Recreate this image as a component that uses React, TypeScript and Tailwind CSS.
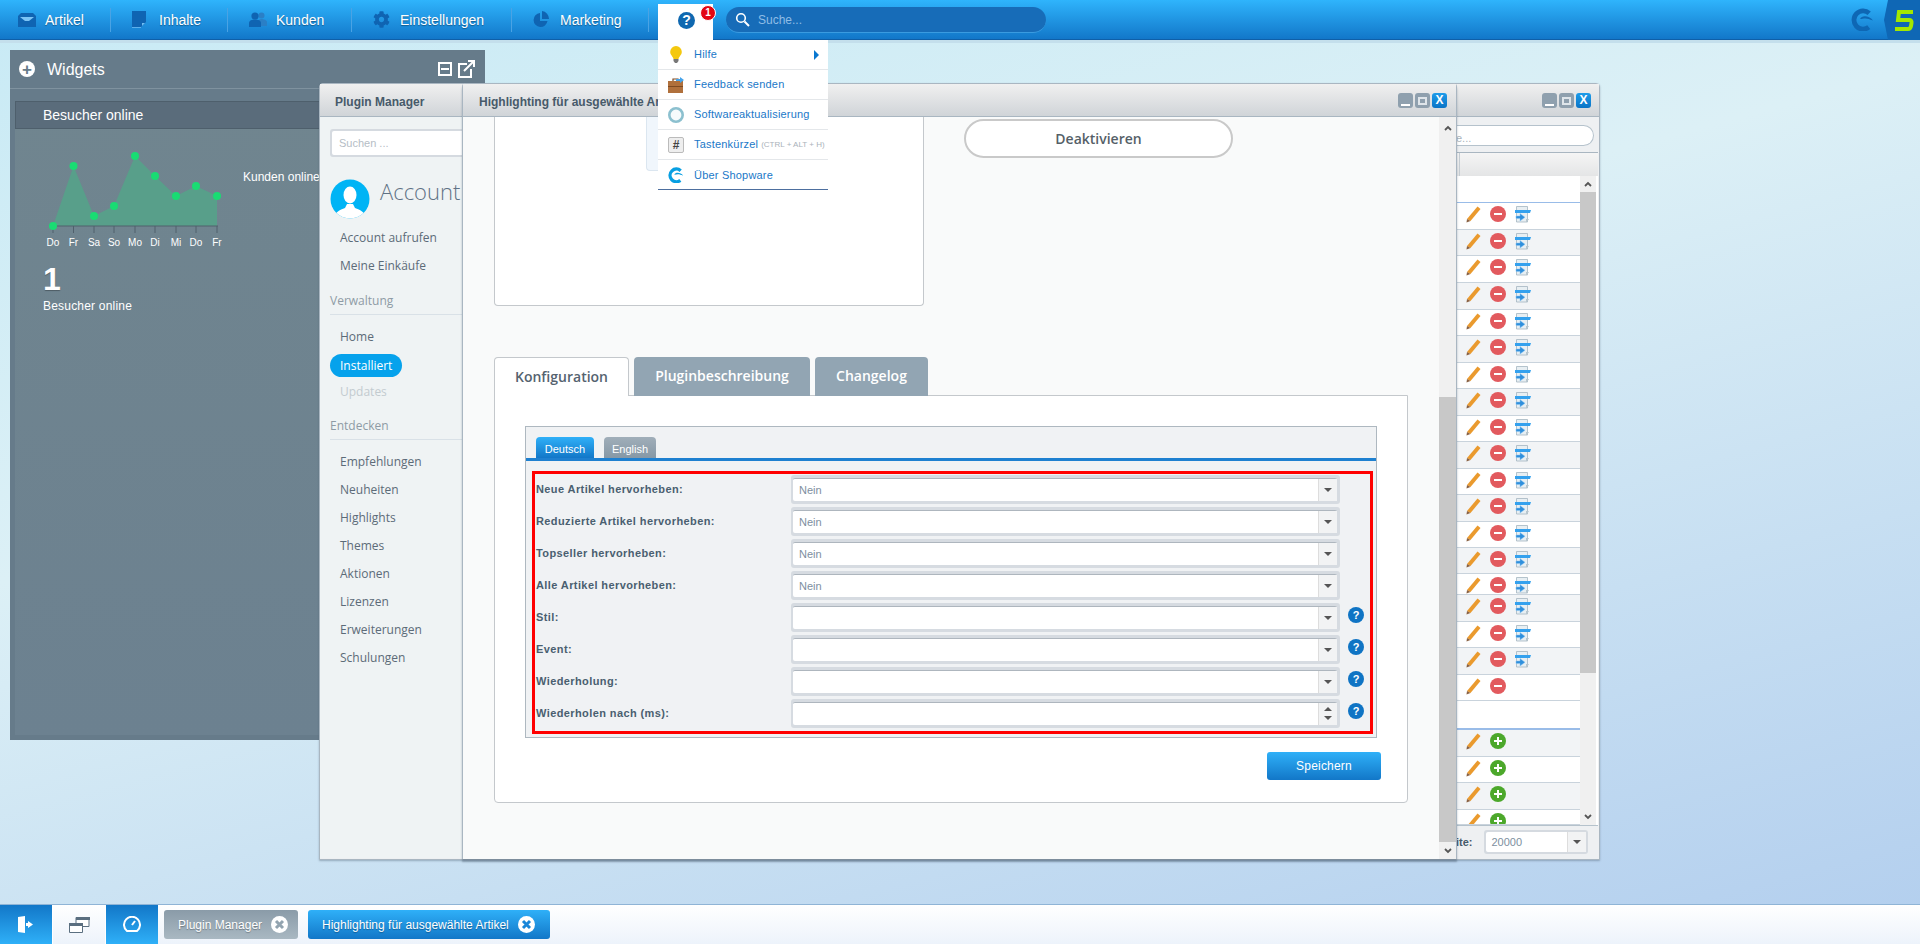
import React from "react";
import { FaCog } from "react-icons/fa";

const ARIAL = "font-['Liberation_Sans',Arial,sans-serif]";
const OPEN = "font-['Open_Sans','Noto_Sans',sans-serif]";

const ShopwareLogo = ({ color = "#0e67b4", className = "" }: { color?: string; className?: string }) => (
  <svg viewBox="0 0 24 24" className={className}>
    <path d="M19 5.500A9.500 9.500 0 1 0 18.500 20" fill="none" stroke={color} strokeWidth="5" />
    <path fill={color} d="M9.500 11.500C11 7.500 18.500 7.500 23 13c-4-1-5.500-2-8-2-2 0-3.500.5-5.500.5z" />
  </svg>
);

const NavIcon = ({ kind }: { kind: string }) => {
  const c = "#0f64b2";
  if (kind === "artikel")
    return (
      <svg width="18" height="16" viewBox="0 0 18 16">
        <path fill={c} d="M0 4 3 1h12l3 3v11H0z" />
        <path fill="#7cc4f5" d="M2 5h14l-5 4H7z" />
      </svg>
    );
  if (kind === "inhalte")
    return (
      <svg width="14" height="17" viewBox="0 0 14 17">
        <path fill={c} d="M0 0h14v11l-5 5H0z" />
        <path fill="#6ebcf2" d="M10 12h3l-3 3z" />
        <path fill="#5cb0ec" d="M0 16h9v1H0z" />
      </svg>
    );
  if (kind === "kunden")
    return (
      <svg width="18" height="15" viewBox="0 0 18 15">
        <circle cx="12.500" cy="3.500" r="3" fill="#2a7fc6" />
        <path fill="#2a7fc6" d="M9 14V10c0-2 2-3 3.500-3S18 8 18 10v4z" />
        <circle cx="6" cy="4" r="3.600" fill={c} />
        <path fill={c} d="M0 15v-4c0-2.500 3-3.600 6-3.600s6 1.100 6 3.600v4z" />
      </svg>
    );
  if (kind === "gear") return <FaCog size={17} color={c} />;
  return (
    <svg width="16" height="17" viewBox="0 0 16 17">
      <path fill={c} d="M7 2a7 7 0 1 0 7.500 8H7z" />
      <path fill={c} d="M9 0v8h7a8 8 0 0 0-7-8z" />
    </svg>
  );
};

const navItems = [
  { icon: "artikel", label: "Artikel", iconW: "w-[18px]", textGap: "ml-[9px]", pad: "pl-[18px] w-[111px]" },
  { icon: "inhalte", label: "Inhalte", iconW: "w-[14px]", textGap: "ml-[13px]", pad: "pl-[21px] w-[117px]" },
  { icon: "kunden", label: "Kunden", iconW: "w-[18px]", textGap: "ml-[9px]", pad: "pl-[21px] w-[124px]" },
  { icon: "gear", label: "Einstellungen", iconW: "w-[17px]", textGap: "ml-[10px]", pad: "pl-[21px] w-[160px]" },
  { icon: "pie", label: "Marketing", iconW: "w-[16px]", textGap: "ml-[11px]", pad: "pl-[21px] w-[137px]" },
];

const TopBar = () => (
  <div className="relative h-[43px] shrink-0">
    <div className="h-[40px] bg-[linear-gradient(#2fb4fc,#1277c9)] border-b border-[#0f5fa8] flex items-center">
      {navItems.map((n) => (
        <div key={n.label} className={`${n.pad} h-[24px] flex items-center border-r border-[#4aa3e4]`}>
          <span className={`${n.iconW} flex justify-center`}>
            <NavIcon kind={n.icon} />
          </span>
          <span className={`${n.textGap} pt-[1px] text-[14px] text-white [text-shadow:0_1px_1px_rgba(0,0,0,0.35)]`}>{n.label}</span>
        </div>
      ))}
      <div className="w-[9px]" />
      <div className="w-[55px] h-[36px] mt-[4px] bg-white relative flex justify-center pt-[8px] self-start">
        <span className="absolute left-[20px] top-[8px] w-[17px] h-[17px] rounded-full bg-[#0f68b0] text-white text-[14px] leading-[17px] font-bold text-center">?</span>
        <span className="absolute left-[42px] top-[1px] w-[16px] h-[16px] rounded-full bg-[#e30613] border border-white text-white text-[10px] leading-[14px] font-bold text-center">1</span>
      </div>
      <div className="ml-[13px] w-[320px] h-[26px] rounded-full bg-[#176cb8] border-b border-[#3a9be0] flex items-center pl-[9px]">
        <svg width="15" height="15" viewBox="0 0 15 15">
          <circle cx="6" cy="6" r="4.300" fill="none" stroke="#fff" strokeWidth="1.600" />
          <path d="M9.500 9.500 14 14" stroke="#fff" strokeWidth="2" />
        </svg>
        <span className="ml-[8px] pt-[1px] text-[12px] text-[#8fbde6]">Suche...</span>
      </div>
      <div className="ml-auto flex items-center h-[40px]">
        <ShopwareLogo className="w-[23px] h-[23px] mr-[10px]" />
        <svg width="36" height="40" viewBox="0 0 36 40">
          <path fill="#0f67b5" d="M4 0h32v40H4L0 20z" />
          <path d="M29 12H15l-1 8h11q3 0 2.500 3l-.5 3q-.5 3-3 3H11" fill="none" stroke="#a3e800" strokeWidth="4" />
        </svg>
      </div>
    </div>
    <div className="h-[3px] bg-[#c4dfec]" />
  </div>
);

const chart = [
  [53, 225, "Do"],
  [73.5, 165, "Fr"],
  [94, 215, "Sa"],
  [114, 205, "So"],
  [135, 155, "Mo"],
  [155, 175, "Di"],
  [176, 195, "Mi"],
  [196, 185, "Do"],
  [217, 195, "Fr"],
] as const;

const WidgetsPanel = () => (
  <div className="absolute left-[10px] top-[50px] w-[475px] h-[690px] bg-[#667b8a] text-white">
    <div className="h-[39px] border-b border-[#7f929f] flex items-center pl-[9px] pr-[10px]">
      <span className="w-[16px] h-[16px] rounded-full bg-white text-[#667b8a] flex items-center justify-center text-[17px] font-bold leading-none">+</span>
      <span className="ml-[12px] pt-[1px] text-[16px]">Widgets</span>
      <span className="ml-auto flex items-center gap-[6px]">
        <span className="w-[14px] h-[14px] border-2 border-white flex items-center justify-center">
          <span className="w-[8px] h-[2px] bg-white" />
        </span>
        <svg width="17" height="18" viewBox="0 0 17 18" fill="none" stroke="#fff" strokeWidth="2">
          <path d="M9 4H1v13h12V9" />
          <path d="M6 11 15 2M10 1h6v6" />
        </svg>
      </span>
    </div>
    <div className="ml-[5px] mt-[12px] h-[634px] bg-[linear-gradient(#70858f,#6c8190)]">
      <div className="h-[28px] bg-[#5a6c7b] border border-[#4e5f6c] flex items-center pl-[27px] pt-[1px] text-[14px]">Besucher online</div>
      <div className="flex">
        <svg width="190" height="100" viewBox="45 148 190 100" className="ml-[30px] mt-[20px] shrink-0">
          <polygon
            fill="#589f8a"
            points={`53,225 ${chart.map((p) => `${p[0]},${p[1]}`).join(" ")} 217,225`}
          />
          <line x1="53" y1="225" x2="218" y2="225" stroke="#50606c" strokeWidth="1" />
          {chart.map((p, i) => (
            <g key={i}>
              <line x1={p[0]} y1="225" x2={p[0]} y2="232" stroke="#50606c" />
              <circle cx={p[0]} cy={p[1]} r="4" fill="#19dc73" />
              <text x={p[0]} y="245" textAnchor="middle" fontSize="10" fill="#fff" fontFamily="Liberation Sans">
                {p[2]}
              </text>
            </g>
          ))}
        </svg>
        <span className="ml-[8px] mt-[39px] text-[12px]">Kunden online</span>
      </div>
      <div className="ml-[28px] mt-[14px] text-[32px] leading-[32px] font-bold [text-shadow:0_1px_1px_rgba(0,0,0,0.3)]">1</div>
      <div className="ml-[28px] mt-[3px] text-[12px] leading-[16px] tracking-[0.2px]">Besucher online</div>
    </div>
  </div>
);

const WinButtons = () => (
  <div className="flex gap-[2px]">
    <span className="w-[15px] h-[15px] rounded-[3px] bg-[#8fa0ae] flex items-end justify-center pb-[2px]">
      <span className="w-[9px] h-[2px] bg-white" />
    </span>
    <span className="w-[15px] h-[15px] rounded-[3px] bg-[#8fa0ae] flex items-center justify-center">
      <span className="w-[9px] h-[8px] border-2 border-[#dfe5ea]" />
    </span>
    <span className="w-[15px] h-[15px] rounded-[3px] bg-[linear-gradient(#1d9cea,#0b74c6)] text-white text-[12px] leading-[14px] font-bold text-center">X</span>
  </div>
);

const WinHeader = ({ title }: { title?: string }) => (
  <div className="h-[33px] shrink-0 bg-[linear-gradient(#f0f0f0,#d0d4d8)] border-b border-[#a9b6c1] flex items-center text-[12px] font-bold text-[#475a6a]">
    {title}
  </div>
);

const Arrow = ({ up = false }: { up?: boolean }) => (
  <svg width="8" height="6" viewBox="0 0 8 6">
    <path d={up ? "M1 5 4 2l3 3" : "M1 1l3 3 3-3"} fill="none" stroke="#555" strokeWidth="1.800" />
  </svg>
);

const Pencil = () => (
  <svg width="15" height="17" viewBox="0 0 15 17">
    <path fill="#ea9a2e" d="M11.500 0.500 14.500 3 4.500 15 1 13z" />
    <path fill="#8a6244" d="M1 13l3.500 2L0.500 16.500z" />
  </svg>
);

const RoundSign = ({ plus = false }: { plus?: boolean }) => (
  <span className={`w-[16px] h-[16px] rounded-full relative block ${plus ? "bg-[#4ca82b]" : "bg-[#e25a5e]"}`}>
    <span className="absolute left-[4px] top-[7px] w-[8px] h-[2px] bg-white" />
    {plus && <span className="absolute left-[7px] top-[4px] w-[2px] h-[8px] bg-white" />}
  </span>
);

const ExportIcon = () => (
  <svg width="16" height="17" viewBox="0 0 16 17">
    <path fill="#e8eff3" stroke="#a3b5c0" strokeWidth="0.800" d="M1.500 .5h11v15.500h-11z" />
    <path fill="#34a1ee" d="M0 4h16l-1 3H0z" />
    <path fill="#2f8fdc" stroke="#8cc6f2" strokeWidth="0.500" d="M1 10h4V7.500l5 3.800-5 3.700V12.500H1z" />
    <path fill="#b8c6ce" d="M11 13h3l-2 3h-1z" />
  </svg>
);

const gridRows = [
  { h: 27, kind: "full", alt: false },
  { h: 26, kind: "full", alt: true },
  { h: 27, kind: "full", alt: false },
  { h: 27, kind: "full", alt: true },
  { h: 26, kind: "full", alt: false },
  { h: 27, kind: "full", alt: true },
  { h: 26, kind: "full", alt: false },
  { h: 27, kind: "full", alt: true },
  { h: 26, kind: "full", alt: false },
  { h: 27, kind: "full", alt: true },
  { h: 26, kind: "full", alt: false },
  { h: 27, kind: "full", alt: true },
  { h: 26, kind: "full", alt: false },
  { h: 26, kind: "full", alt: true },
  { h: 21, kind: "full", alt: false },
  { h: 27, kind: "full", alt: true },
  { h: 26, kind: "full", alt: false },
  { h: 27, kind: "full", alt: true },
  { h: 26, kind: "minus", alt: false },
];
const addRows = [
  { h: 27, alt: true },
  { h: 26, alt: false },
  { h: 27, alt: true },
  { h: 15, alt: false },
];

const RightGrid = () => (
  <div className="w-[143px] shrink-0 flex flex-col bg-[#eef0f2] border-l border-[#a9b6c1]">
    <div className="h-[34px] shrink-0 flex items-center border-b border-[#a9b6c1] mt-[2px] pr-[4px]">
      <div className="w-full h-[21px] rounded-r-full bg-white border border-l-0 border-[#b5c2cc] text-[11px] text-[#aab4bc] leading-[24px]">e...</div>
    </div>
    <div className="h-[23px] shrink-0 bg-[linear-gradient(#f5f5f5,#e4e5e6)] flex">
      <span className="ml-[3px] w-px bg-[#c5ccd2]" />
    </div>
    <div className="flex-1 flex min-h-0 bg-white">
      <div className="w-[124px] shrink-0 overflow-hidden">
        <div className="h-[26px]" />
        <div className="h-[1px] bg-[#99bce8]" />
        {gridRows.map((r, i) => (
          <div
            key={i}
            style={{ height: r.h }}
            className={`flex items-start pt-[3px] pl-[10px] gap-[9px] border-b border-[#c9d3dc] ${r.alt ? "bg-[#f2f4f6]" : "bg-white"}`}
          >
            <Pencil />
            <RoundSign />
            {r.kind === "full" && <ExportIcon />}
          </div>
        ))}
        <div className="h-[29px] border-b-2 border-[#99bce8]" />
        {addRows.map((r, i) => (
          <div
            key={i}
            style={{ height: r.h }}
            className={`flex items-start pt-[3px] pl-[10px] gap-[9px] overflow-hidden border-b border-[#c9d3dc] ${r.alt ? "bg-[#f2f4f6]" : "bg-white"}`}
          >
            <Pencil />
            <RoundSign plus />
          </div>
        ))}
      </div>
      <div className="w-[16px] shrink-0 flex flex-col bg-[#f0f0f0]">
        <div className="h-[16px] flex items-center justify-center">
          <Arrow up />
        </div>
        <div className="h-[481px] bg-[#c8c8c8]" />
        <div className="mt-auto h-[16px] flex items-center justify-center">
          <Arrow />
        </div>
      </div>
    </div>
    <div className="h-[33px] shrink-0 border-t border-[#b5c2cc] flex items-center">
      <span className="text-[11px] font-bold text-[#475a6a]">ite:</span>
      <div className="ml-[11px] w-[104px] h-[24px] bg-[#d5dae0] rounded-[3px] p-[2px] flex">
        <div className="flex-1 bg-white rounded-l-[2px] text-[11px] text-[#7d8fa0] leading-[20px] pl-[6px]">20000</div>
        <div className="w-[19px] bg-[#f2f3f4] border-l border-[#ddd] flex items-center justify-center">
          <span className="w-0 h-0 border-x-[4px] border-x-transparent border-t-[4px] border-t-[#555]" />
        </div>
      </div>
    </div>
  </div>
);

const sideGroups: { title?: string; items: string[] }[] = [
  { items: ["Account aufrufen", "Meine Einkäufe"] },
  { title: "Verwaltung", items: ["Home", "Installiert", "Updates"] },
  { title: "Entdecken", items: ["Empfehlungen", "Neuheiten", "Highlights", "Themes", "Aktionen", "Lizenzen", "Erweiterungen", "Schulungen"] },
];

const Sidebar = () => (
  <div className={`w-[143px] shrink-0 bg-[#eff3f4] pl-[10px] ${OPEN}`}>
    <div className="mt-[12px] h-[28px] -mr-[10px] bg-[#d5dae0] rounded-[3px] p-[2px]">
      <div className={`h-full bg-white rounded-[2px] pl-[7px] text-[11px] leading-[24px] text-[#b5bdc5] ${ARIAL}`}>Suchen ...</div>
    </div>
    <div className="mt-[22px] h-[40px] flex">
      <svg width="40" height="40" viewBox="0 0 40 40" className="shrink-0">
        <defs>
          <clipPath id="av">
            <circle cx="20" cy="20" r="19.500" />
          </clipPath>
        </defs>
        <circle cx="20" cy="20" r="19.500" fill="#00b4f5" />
        <g clipPath="url(#av)" fill="#fff">
          <ellipse cx="20" cy="16" rx="6.500" ry="8.500" />
          <path d="M4 40c0-7 6-9 11-11l2-4h6l2 4c5 2 11 4 11 11z" />
        </g>
      </svg>
      <span className="ml-[10px] -mt-[2px] text-[22px] leading-[28px] font-light text-[#5f7285]">Account</span>
    </div>
    <div className="mt-[5px]">
      {sideGroups.map((g, i) => (
        <div key={i}>
          {g.title && (
            <div className={`border-b border-[#d9e1e7] text-[12px] leading-[16px] text-[#8e9ba5] ${i === 2 ? "h-[34px] pt-[12px]" : "h-[35px] pt-[13px]"}`}>{g.title}</div>
          )}
          <div className={g.title ? "mt-[8px]" : ""}>
            {g.items.map((t) =>
              t === "Installiert" ? (
                <div key={t} className="h-[28px] flex items-center">
                  <span className="w-[72px] h-[23px] rounded-full bg-[#06a2ec] text-white text-[12px] leading-[23px] pl-[10px]">{t}</span>
                </div>
              ) : (
                <div key={t} className={`h-[28px] leading-[28px] pl-[10px] text-[12px] ${t === "Updates" ? "text-[#c3cbd0] -mt-px" : "text-[#5c6b78]"}`}>{t}</div>
              ),
            )}
          </div>
        </div>
      ))}
    </div>
  </div>
);

const fields = [
  { label: "Neue Artikel hervorheben:", value: "Nein" },
  { label: "Reduzierte Artikel hervorheben:", value: "Nein" },
  { label: "Topseller hervorheben:", value: "Nein" },
  { label: "Alle Artikel hervorheben:", value: "Nein" },
  { label: "Stil:", value: "", help: true },
  { label: "Event:", value: "", help: true },
  { label: "Wiederholung:", value: "", help: true },
  { label: "Wiederholen nach (ms):", value: "", help: true, number: true },
];

const FormRow = ({ label, value, help, number }: { label: string; value: string; help?: boolean; number?: boolean }) => (
  <div className="h-[32px] flex items-center">
    <label className="w-[256px] pl-px -mt-px text-[11px] font-bold text-[#4a5f70] tracking-[0.4px]">{label}</label>
    <div className="w-[549px] h-[29px] bg-[#d6dbe1] rounded-[3px] pl-[2px] pr-[3px] py-[3px] -mt-[2px]">
      <div className="h-full bg-white rounded-[2px] border-t border-[#aeb6be] flex">
        <span className="flex-1 pl-[6px] text-[11px] leading-[22px] text-[#7d8fa0]">{value}</span>
        {number ? (
          <span className="w-[19px] border-l border-[#ddd] bg-[#f2f3f4] flex flex-col items-center justify-center gap-[5px]">
            <span className="w-0 h-0 border-x-[4px] border-x-transparent border-b-[4px] border-b-[#555]" />
            <span className="w-0 h-0 border-x-[4px] border-x-transparent border-t-[4px] border-t-[#555]" />
          </span>
        ) : (
          <span className="w-[19px] border-l border-[#ddd] bg-[#f2f3f4] flex items-center justify-center">
            <span className="w-0 h-0 border-x-[4px] border-x-transparent border-t-[4px] border-t-[#555]" />
          </span>
        )}
      </div>
    </div>
    {help && (
      <span className="ml-[8px] -mt-[6px] w-[16px] h-[16px] rounded-full bg-[#0f74c4] text-white text-[11px] leading-[16px] font-bold text-center">?</span>
    )}
  </div>
);

const TopWindow = () => (
  <div className="absolute left-[462px] top-[83px] w-[995px] h-[776px] flex flex-col bg-[#f9fafa] border-x border-t border-[#a9b6c1] rounded-t-[4px] shadow-[0_3px_2px_rgba(70,90,110,0.45)]">
    <WinHeader />
    <div className="flex-1 flex min-h-0">
      <div className="flex-1 pl-[31px] overflow-hidden">
        <div className="flex">
          <div className="w-[430px] h-[189px] bg-white border-x border-b border-[#c4c8cc] rounded-b-[4px] pl-[151px]">
            <div className="w-[20px] h-[54px] bg-[#f0f6fc] border-l border-b border-[#dbe6f0] rounded-bl-[4px]" />
          </div>
          <div className={`ml-[40px] mt-[2px] w-[269px] h-[39px] rounded-full border-2 border-[#c9c9c9] bg-white flex items-center justify-center text-[14px] font-semibold text-[#555f68] ${OPEN}`}>Deaktivieren</div>
        </div>
        <div className={`mt-[51px] h-[39px] flex gap-[5px] text-[14px] font-semibold relative z-10 ${OPEN}`}>
          <div className="w-[135px] bg-white border-x border-t border-[#c4c8cc] rounded-t-[4px] text-center leading-[37px] text-[#55636f]">Konfiguration</div>
          <div className="w-[176px] bg-[#92a5b3] rounded-t-[4px] text-center leading-[37px] text-white">Pluginbeschreibung</div>
          <div className="w-[113px] bg-[#92a5b3] rounded-t-[4px] text-center leading-[37px] text-white">Changelog</div>
        </div>
        <div className="w-[914px] h-[408px] -mt-px bg-white border border-[#c4c8cc] rounded-b-[4px] pl-[30px] pt-[30px]">
          <div className="w-[852px] h-[312px] bg-[#f0f2f4] border border-[#aeb8c0] pl-[6px] pt-[10px]">
            <div className="flex gap-[10px] h-[21px] text-[11px] text-center leading-[24px] text-white">
              <span className="w-[58px] rounded-t-[4px] bg-[linear-gradient(#2fb0f8,#1277c8)] ml-[4px]">Deutsch</span>
              <span className="w-[52px] rounded-t-[4px] bg-[linear-gradient(#a0aeb9,#8698a6)]">English</span>
            </div>
            <div className="h-[3px] bg-[#1e80d0] -ml-[6px]" />
            <div className="w-[841px] h-[263px] mt-[10px] border-[3px] border-[#ff0000] pb-px">
              {fields.map((f) => (
                <FormRow key={f.label} {...f} />
              ))}
            </div>
          </div>
          <div className="ml-[742px] mt-[14px] w-[114px] h-[28px] rounded-[3px] bg-[linear-gradient(#2fb0f8,#1277c8)] text-white text-[12px] tracking-[0.2px] leading-[28px] text-center">Speichern</div>
        </div>
      </div>
      <div className="w-[17px] shrink-0 flex flex-col bg-[#f0f0f0]">
        <div className="h-[22px] flex items-center justify-center">
          <Arrow up />
        </div>
        <div className="mt-[258px] h-[445px] bg-[#c8c8c8]" />
        <div className="flex-1 flex items-center justify-center">
          <Arrow />
        </div>
      </div>
    </div>
    <span className="absolute left-[16px] top-[9px] text-[12px] font-bold text-[#475a6a]">Highlighting für ausgewählte Artikel</span>
    <span className="absolute right-[9px] top-[9px]">
      <WinButtons />
    </span>
  </div>
);

const BackWindow = () => (
  <div className="absolute left-[319px] top-[83px] w-[1281px] h-[777px] flex flex-col bg-[#eef0f2] border border-[#a9b6c1] rounded-t-[4px] shadow-[0_1px_2px_rgba(70,90,110,0.4)]">
    <WinHeader />
    <div className="flex-1 flex min-h-0 mb-[1px] mr-[1px]">
      <Sidebar />
      <div className="flex-1" />
      <RightGrid />
    </div>
    <span className="absolute left-[15px] top-[9px] text-[12px] font-bold text-[#475a6a]">Plugin Manager</span>
    <span className="absolute right-[8px] top-[9px]">
      <WinButtons />
    </span>
  </div>
);

const helpMenu = [
  { key: "hilfe", label: "Hilfe" },
  { key: "feedback", label: "Feedback senden" },
  { key: "update", label: "Softwareaktualisierung" },
  { key: "keys", label: "Tastenkürzel" },
  { key: "about", label: "Über Shopware" },
];

const MenuIcon = ({ kind }: { kind: string }) => {
  if (kind === "hilfe")
    return (
      <svg width="12" height="17" viewBox="0 0 12 17">
        <path fill="#f4c80e" d="M6 0a5.800 5.800 0 0 1 5.800 5.800C11.800 9 9 10.500 8.500 13h-5C3 10.500.2 9 .2 5.800A5.800 5.800 0 0 1 6 0z" />
        <path fill="#777" d="M3.500 13h5v2l-1.500 2H5l-1.500-2z" />
      </svg>
    );
  if (kind === "feedback")
    return (
      <svg width="16" height="16" viewBox="0 0 16 16">
        <path fill="#b0703c" d="M0 4h15v12H0z" />
        <path fill="#7d4a22" d="M0 9h15v1H0z" />
        <path fill="none" stroke="#7d4a22" strokeWidth="1.200" d="M5 4V2h5v2" />
        <path fill="#46a3ea" d="M8 2h4V0l4 3-4 3V4H8z" />
      </svg>
    );
  if (kind === "update")
    return (
      <svg width="16" height="16" viewBox="0 0 16 16">
        <circle cx="8" cy="8" r="6.700" fill="#f7fbfc" stroke="#8cc0cf" strokeWidth="2.600" />
      </svg>
    );
  if (kind === "keys")
    return (
      <span className="w-[16px] h-[16px] rounded-[2px] bg-[#eee] border border-[#bbb] text-[#444] text-[12px] leading-[14px] font-bold text-center block">#</span>
    );
  return <ShopwareLogo color="#079fe2" className="w-[16px] h-[16px]" />;
};

const HelpDropdown = () => (
  <div className="absolute left-[658px] top-[40px] w-[170px] h-[150px] bg-white border-b border-[#4d6f9f]">
    {helpMenu.map((m, i) => (
      <div key={m.key} className={`h-[30px] flex items-center relative ${i < 4 ? "border-b border-[#e4e7ea]" : ""}`}>
        <span className="w-[36px] flex justify-center">
          <MenuIcon kind={m.key} />
        </span>
        <span className="text-[11px] text-[#1a78c8] tracking-[0.2px]">{m.label}</span>
        {m.key === "keys" && <span className="ml-[3px] text-[8px] text-[#aab2ba]">(CTRL + ALT + H)</span>}
        {m.key === "hilfe" && (
          <span className="absolute right-[9px] w-0 h-0 border-y-[5px] border-y-transparent border-l-[5px] border-l-[#0a78d0]" />
        )}
      </div>
    ))}
  </div>
);

const TaskClose = ({ color }: { color: string }) => (
  <svg width="17" height="17" viewBox="0 0 17 17" className="ml-[9px] shrink-0">
    <circle cx="8.500" cy="8.500" r="8.500" fill="#fff" />
    <path d="M5 5l7 7M12 5l-7 7" stroke={color} strokeWidth="3" />
  </svg>
);

const TaskBar = () => (
  <div className="absolute left-0 right-0 bottom-0 h-[40px] border-t border-[#8fb4d6] bg-[linear-gradient(#fff,#edf3fb)] flex">
    <div className="w-[52px] bg-[linear-gradient(#1277c8,#2fb0f8)] flex items-center justify-center">
      <svg width="16" height="17" viewBox="0 0 16 17">
        <path fill="#fff" d="M0 1l7-1v17l-7-1z" />
        <path fill="#fff" d="M15 8.500 10 5v2H8v3h2v2z" />
      </svg>
    </div>
    <div className="w-[54px] flex items-center justify-center border-x border-white">
      <svg width="21" height="16" viewBox="0 0 21 16">
        <path fill="#fff" stroke="#5b6f80" d="M7 .5h13v9H7z" />
        <path fill="#5b6f80" d="M7 0h14v3H7z" />
        <path fill="#fff" stroke="#5b6f80" d="M.5 6.500h13v9H.5z" />
        <path fill="#5b6f80" d="M0 6h14v3H0z" />
      </svg>
    </div>
    <div className="w-[52px] bg-[linear-gradient(#1277c8,#2fb0f8)] flex items-center justify-center">
      <svg width="18" height="17" viewBox="0 0 18 17" fill="none" stroke="#fff" strokeWidth="2">
        <path d="M4 15a8 8 0 1 1 10 0z" />
        <path d="M9 9l3-4" />
      </svg>
    </div>
    <div className="ml-[6px] mt-[5px] w-[134px] h-[29px] rounded-[3px] bg-[linear-gradient(#8a9ba8,#a9b8c2)] flex items-center pl-[14px] text-[12px] text-white [text-shadow:0_1px_1px_rgba(0,0,0,0.3)]">
      Plugin Manager
      <TaskClose color="#93a4b0" />
    </div>
    <div className="ml-[10px] mt-[5px] w-[242px] h-[29px] rounded-[3px] bg-[linear-gradient(#2fb0f8,#1277c8)] flex items-center pl-[14px] text-[12px] text-white [text-shadow:0_1px_1px_rgba(0,0,0,0.3)]">
      Highlighting für ausgewählte Artikel
      <TaskClose color="#1a86d8" />
    </div>
  </div>
);

export default function App() {
  return (
    <div className={`relative w-[1920px] h-[944px] overflow-hidden bg-[linear-gradient(165deg,#c8eaf5_0%,#dcf0f6_40%,#b2ceee_100%)] ${ARIAL}`}>
      <TopBar />
      <WidgetsPanel />
      <BackWindow />
      <TopWindow />
      <HelpDropdown />
      <TaskBar />
    </div>
  );
}
